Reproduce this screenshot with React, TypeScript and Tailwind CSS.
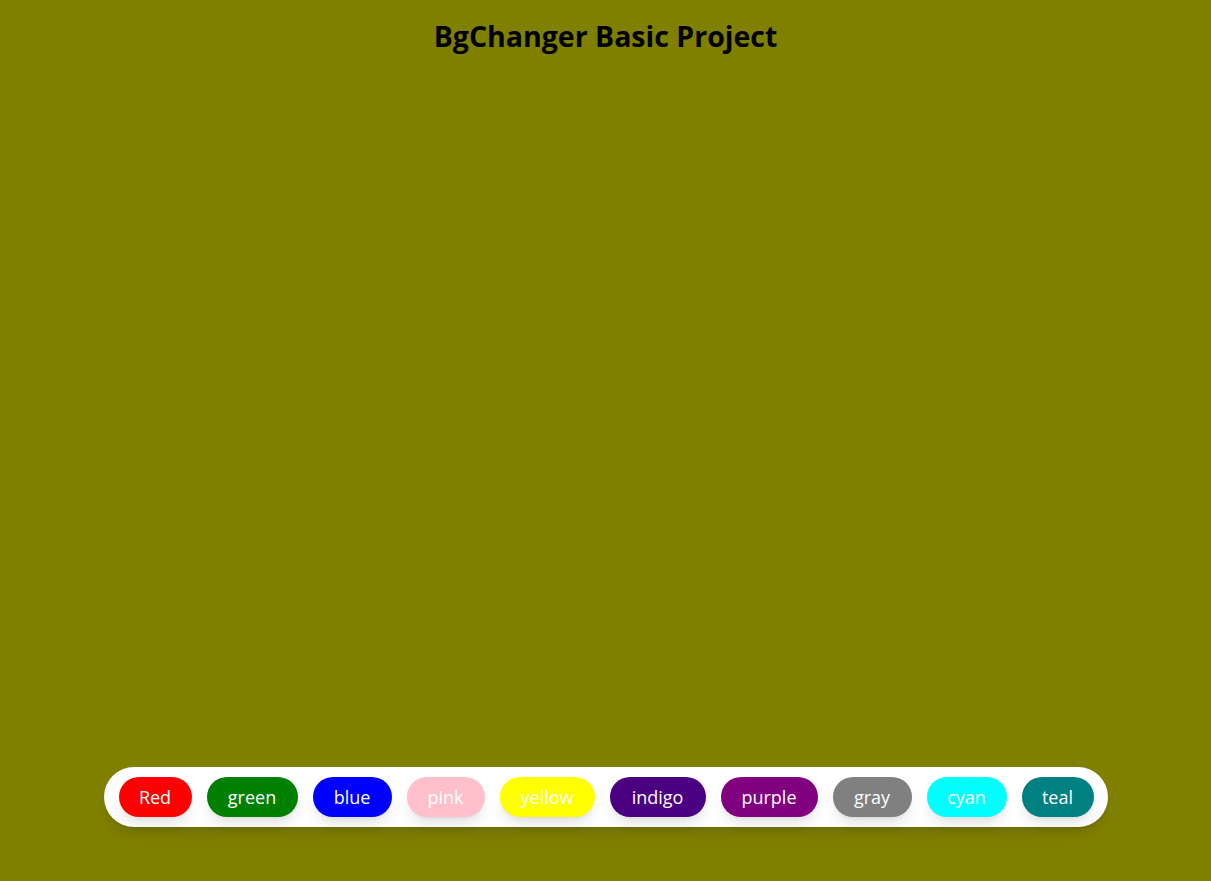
const colors = [
  { name: "Red", bg: "bg-[#ff0000]", w: "w-[73px]" },
  { name: "green", bg: "bg-[#008000]", w: "w-[91px]" },
  { name: "blue", bg: "bg-[#0000ff]", w: "w-[79px]" },
  { name: "pink", bg: "bg-[#ffc0cb]", w: "w-[78px]" },
  { name: "yellow", bg: "bg-[#ffff00]", w: "w-[95px]" },
  { name: "indigo", bg: "bg-[#4b0082]", w: "w-[96px]" },
  { name: "purple", bg: "bg-[#800080]", w: "w-[97px]" },
  { name: "gray", bg: "bg-[#808080]", w: "w-[79px]" },
  { name: "cyan", bg: "bg-[#00ffff]", w: "w-[80px]" },
  { name: "teal", bg: "bg-[#008080]", w: "w-[72px]" },
];

export default function App() {
  return (
    <div className="flex flex-col justify-between h-screen w-full bg-[#808000] font-['Open_Sans',sans-serif]">
      <h1 className="pt-[18px] text-center text-[28.5px] leading-9 font-bold text-black">
        BgChanger Basic Project
      </h1>
      <div className="flex justify-center mb-[54px]">
        <div className="flex gap-[15px] pl-[15px] pr-[14px] py-[10px] bg-white rounded-full shadow-lg">
          {colors.map((c) => (
            <button
              key={c.name}
              className={`${c.bg} ${c.w} h-10 rounded-full text-white text-[18px] shadow-lg outline-none`}
            >
              {c.name}
            </button>
          ))}
        </div>
      </div>
    </div>
  );
}
